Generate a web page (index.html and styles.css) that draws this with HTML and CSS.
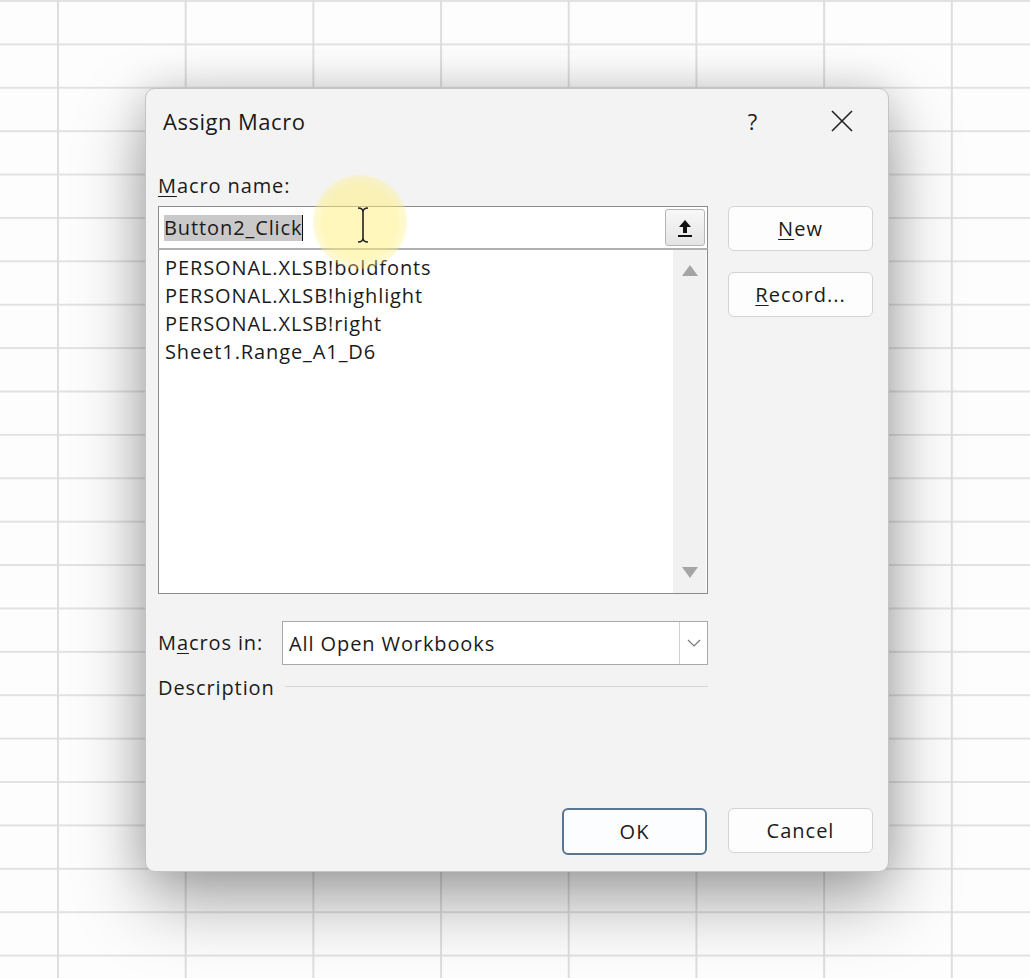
FILE: index.html
```html
<!DOCTYPE html>
<html lang="en">
<head>
    <meta charset="UTF-8">
    <meta name="viewport" content="width=device-width, initial-scale=1.0">
    <title>Assign Macro</title>
    <link rel="stylesheet" href="styles.css">
</head>
<body>
    <div class="dialog">
        <div class="titlebar">
            <span class="title">Assign Macro</span>
            <span class="help">?</span>
            <span class="close">
                <svg width="22" height="22" viewBox="0 0 22 22"><path d="M1 1 L21 21 M21 1 L1 21" stroke="#222" stroke-width="1.6" fill="none"/></svg>
            </span>
        </div>

        <div class="body">
            <div class="main">
                <div class="lbl"><u>M</u>acro name:</div>
                <div class="namebox">
                    <div class="name-input">
                        <span class="sel">Button2_Click</span>
                        <span class="caret"></span>
                        <span class="collapse">
                            <svg width="16" height="20" viewBox="0 0 16 20"><path d="M8 2 L2 9 H6 V15 H10 V9 H14 Z" fill="#111"/><rect x="1" y="17" width="14" height="2" fill="#111"/></svg>
                        </span>
                    </div>
                    <div class="list">
                        <ul class="items">
                            <li>PERSONAL.XLSB!boldfonts</li>
                            <li>PERSONAL.XLSB!highlight</li>
                            <li>PERSONAL.XLSB!right</li>
                            <li>Sheet1.Range_A1_D6</li>
                        </ul>
                        <div class="vscroll">
                            <span class="arr up"></span>
                            <span class="arr down"></span>
                        </div>
                    </div>
                </div>

                <div class="row-in">
                    <div class="lbl lbl-in">M<u>a</u>cros in:</div>
                    <div class="combo">
                        <span>All Open Workbooks</span>
                        <span class="drop">
                            <svg width="14" height="8" viewBox="0 0 14 8"><path d="M1 1 L7 7 L13 1" stroke="#777" stroke-width="1.2" fill="none"/></svg>
                        </span>
                    </div>
                </div>

                <div class="desc">
                    <span class="lbl">Description</span>
                    <span class="rule"></span>
                </div>
            </div>

            <div class="side">
                <button class="btn"><u>N</u>ew</button>
                <button class="btn"><u>R</u>ecord...</button>
            </div>
        </div>

        <div class="footer">
            <button class="btn btn-ok">OK</button>
            <button class="btn">Cancel</button>
        </div>

        <!-- mouse pointer with its highlight ring -->
        <div class="spot"></div>
        <div class="ibeam">
            <svg width="12" height="36" viewBox="0 0 12 36"><path d="M1 1 Q6 1 6 5 Q6 1 11 1 M6 5 V31 M1 35 Q6 35 6 31 Q6 35 11 35" stroke="#222" stroke-width="1.6" fill="none"/></svg>
        </div>
    </div>
</body>
</html>
```

FILE: styles.css
```css
body {
    margin: 0;
    height: 978px;
    overflow: hidden;
    background-color: #fdfdfd;
    /* sheet grid: columns ~128px, rows ~43px */
    background-image:
        linear-gradient(to right, #dedede 2px, transparent 2px),
        linear-gradient(to bottom, #e2e2e2 2px, transparent 2px);
    background-size: 127.7px 100%, 100% 43.4px;
    background-position: 57px 0, 0 0;
    font-family: "Open Sans", "Noto Sans", sans-serif;
    color: #1b1b1b;
}

.dialog {
    position: relative;
    box-sizing: border-box;
    width: 744px;
    height: 784px;
    margin: 88px 0 0 145px;
    background: #f3f3f3;
    border: 1px solid #c4c4c4;
    border-radius: 10px;
    box-shadow: 0 30px 70px rgba(0, 0, 0, 0.34), 0 0 40px rgba(0, 0, 0, 0.14);
    display: flex;
    flex-direction: column;
    font-size: 20px;
    letter-spacing: 0.9px;
}

.titlebar {
    height: 63px;
    padding-bottom: 4px;
    display: flex;
    align-items: center;
    padding-left: 17px;
}
.title {
    font-size: 22px;
    flex: 1;
    letter-spacing: 0.5px;
}
.help {
    font-size: 22px;
    width: 22px;
    text-align: center;
    margin-right: 67px;
}
.close {
    display: flex;
    margin-right: 35px;
}

.lbl {
    line-height: 24px;
}
.lbl-in {
    width: 124px;
}
u {
    text-decoration-thickness: 1px;
    text-underline-offset: 3px;
}

.body {
    display: flex;
    gap: 20px;
    padding: 18px 15px 0 12px;
}
.main {
    width: 551px;
}
.namebox {
    margin-top: 8px;
}
.name-input {
    position: relative;
    box-sizing: border-box;
    height: 42px;
    background: #fff;
    border: 1px solid #8a8a8a;
    border-bottom: none;
    display: flex;
    align-items: center;
    padding-left: 5px;
}
.sel {
    background: #c9c9c9;
    line-height: 26px;
}
.caret {
    width: 1px;
    height: 26px;
    background: #111;
}
.collapse {
    box-sizing: border-box;
    margin-left: auto;
    margin-right: 2px;
    width: 40px;
    height: 37px;
    border: 1px solid #b5b5b5;
    border-radius: 3px;
    background: linear-gradient(#f8f8f8, #e4e4e4);
    display: flex;
    align-items: center;
    justify-content: center;
}

.list {
    box-sizing: border-box;
    height: 346px;
    background: #fff;
    border: 1px solid #8a8a8a;
    border-top: 2px solid #b0b0b0;
    display: flex;
}
.items {
    flex: 1;
    list-style: none;
    margin: 0;
    padding: 4px 0 0 6px;
    line-height: 28px;
}
.vscroll {
    width: 33px;
    margin-right: 1px;
    background: #f1f1f1;
    display: flex;
    flex-direction: column;
    justify-content: space-between;
    align-items: center;
    padding: 15px 0 15px;
}
.arr {
    width: 0;
    height: 0;
    border-left: 8px solid transparent;
    border-right: 8px solid transparent;
}
.arr.up {
    border-bottom: 11px solid #a5a5a5;
}
.arr.down {
    border-top: 11px solid #a5a5a5;
}

.row-in {
    display: flex;
    align-items: center;
    margin-top: 27px;
}
.combo {
    box-sizing: border-box;
    flex: 1;
    height: 44px;
    background: #fff;
    border: 1px solid #a8a8a8;
    display: flex;
    align-items: center;
    padding-left: 6px;
}
.drop {
    margin-left: auto;
    width: 27px;
    align-self: stretch;
    border-left: 1px solid #cfcfcf;
    display: flex;
    align-items: center;
    justify-content: center;
}

.desc {
    display: flex;
    align-items: center;
    margin-top: 11px;
    gap: 10px;
}
.rule {
    flex: 1;
    height: 1px;
    background: #d6d6d6;
    margin-top: -3px;
}

.side {
    display: flex;
    flex-direction: column;
    gap: 21px;
    margin-top: 32px;
}
.btn {
    box-sizing: border-box;
    width: 145px;
    height: 45px;
    background: #fdfdfd;
    border: 1px solid #d3d3d3;
    border-radius: 6px;
    font-family: inherit;
    font-size: 20px;
    letter-spacing: 1px;
    color: #1b1b1b;
    padding: 0;
}

.footer {
    margin-top: auto;
    display: flex;
    justify-content: flex-end;
    gap: 21px;
    padding: 0 15px 17px 0;
}
.btn-ok {
    height: 47px;
    margin-bottom: -1px;
    border: 2px solid #5a7590;
    background: #fbfdff;
}

/* pointer overlay */
.spot {
    position: absolute;
    left: 167px;
    top: 86px;
    width: 94px;
    height: 94px;
    border-radius: 50%;
    background: radial-gradient(circle, rgba(255, 238, 120, 0.5) 55%, rgba(255, 240, 140, 0.25) 75%, rgba(255, 240, 140, 0) 100%);
}
.ibeam {
    position: absolute;
    left: 211px;
    top: 118px;
    display: flex;
}
```
